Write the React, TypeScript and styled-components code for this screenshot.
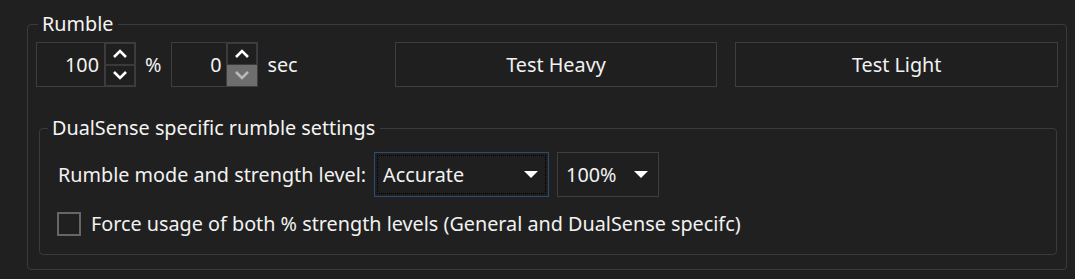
import React from "react";
import styled, { createGlobalStyle } from "styled-components";

const Global = createGlobalStyle`
  html, body { margin: 0; padding: 0; background: #202020; }
  body { font-family: "Noto Sans", "Open Sans", sans-serif; color: #f2f2f2; }
  * { box-sizing: border-box; }
`;

const Page = styled.div`
  width: 1075px;
  height: 279px;
  padding: 12px 8px 0 27px;
  background: #202020;
`;

const Group = styled.fieldset<{ $inner?: boolean }>`
  margin: 0;
  border: 1px solid #3b3b3d;
  border-radius: 4px;
  padding: ${(p) => (p.$inner ? "5px 8px 17px 8px" : "6px 8px 14px 8px")};
  min-width: 0;
`;

const Legend = styled.legend<{ $inner?: boolean }>`
  font-size: 19.8px;
  line-height: 24px;
  padding: 0 5px 0 4px;
  margin-left: ${(p) => (p.$inner ? "0px" : "2px")};
  color: #f4f4f4;
`;

const TopRow = styled.div`
  display: grid;
  grid-template-columns: 1fr 1fr 1fr;
  height: 45px;
`;

const SpinGroup = styled.div`
  display: flex;
  align-items: center;
`;

const Spin = styled.div<{ $w: number }>`
  width: ${(p) => p.$w}px;
  height: 45px;
  border: 1px solid #3e3e42;
  display: flex;
  background: #1f1f1f;
`;

const SpinValue = styled.div`
  flex: 1;
  display: flex;
  align-items: center;
  justify-content: flex-end;
  padding-right: 5px;
  font-size: 19.8px;
`;

const SpinButtons = styled.div`
  width: 31px;
  display: flex;
  flex-direction: column;
  border-left: 1px solid #3e3e42;
`;

const SpinButton = styled.div<{ $hot?: boolean }>`
  flex: 1;
  display: flex;
  align-items: center;
  justify-content: center;
  background: ${(p) => (p.$hot ? "#6e6e6e" : "#1f1f1f")};
  border: 1px solid ${(p) => (p.$hot ? "#6e6e6e" : "#3a3a3e")};
  color: ${(p) => (p.$hot ? "#b9b9b9" : "#ffffff")};
`;

const Unit = styled.span`
  font-size: 19.8px;
  margin: 0 10px 0 9px;
`;

const Button = styled.div`
  margin-left: 18px;
  height: 45px;
  border: 1px solid #3e3e42;
  background: #1f1f1f;
  display: flex;
  align-items: center;
  justify-content: center;
  font-size: 19.8px;
`;

const InnerWrap = styled.div`
  margin: 29px 1px 0 3px;
`;

const ModeRow = styled.div`
  display: flex;
  align-items: center;
  gap: 8px;
  margin-top: 7px;
  padding-left: 10px;
`;

const Label = styled.span`
  font-size: 19.8px;
`;

const Combo = styled.div<{ $w: number; $focus?: boolean }>`
  position: relative;
  width: ${(p) => p.$w}px;
  height: 45px;
  border: 1px solid ${(p) => (p.$focus ? "#2c4c74" : "#3e3e42")};
  background: #1f1f1f;
  display: flex;
  align-items: center;
  justify-content: space-between;
  padding: 0 10px 0 8px;
  font-size: 19.8px;
`;

const FocusRect = styled.div`
  position: absolute;
  inset: 2px;
  border: 1px dotted #000;
  pointer-events: none;
`;

const CheckRow = styled.div`
  display: flex;
  align-items: center;
  gap: 10px;
  margin-top: 13px;
  padding-left: 9px;
`;

const CheckBox = styled.div`
  width: 24px;
  height: 24px;
  border: 2px solid #666666;
  background: #202020;
`;

const CheckText = styled.span`
  font-size: 19.8px;
`;

const Chevron = ({ up }: { up?: boolean }) => (
  <svg width="16" height="9" viewBox="0 0 16 9">
    <polyline
      points={up ? "2,8 8,2 14,8" : "2,1 8,7 14,1"}
      fill="none"
      stroke="currentColor"
      strokeWidth="2.6"
      strokeLinejoin="miter"
    />
  </svg>
);

const Caret = () => (
  <svg width="14" height="8" viewBox="0 0 14 8">
    <polygon points="0,0 14,0 7,7" fill="#ffffff" />
  </svg>
);

export default function App() {
  return (
    <>
      <Global />
      <Page>
        <Group>
          <Legend>Rumble</Legend>
          <TopRow>
            <SpinGroup>
              <Spin $w={100}>
                <SpinValue>100</SpinValue>
                <SpinButtons>
                  <SpinButton><Chevron up /></SpinButton>
                  <SpinButton><Chevron /></SpinButton>
                </SpinButtons>
              </Spin>
              <Unit>%</Unit>
              <Spin $w={87}>
                <SpinValue>0</SpinValue>
                <SpinButtons>
                  <SpinButton><Chevron up /></SpinButton>
                  <SpinButton $hot><Chevron /></SpinButton>
                </SpinButtons>
              </Spin>
              <Unit>sec</Unit>
            </SpinGroup>
            <Button>Test Heavy</Button>
            <Button>Test Light</Button>
          </TopRow>
          <InnerWrap>
            <Group $inner>
              <Legend $inner>DualSense specific rumble settings</Legend>
              <ModeRow>
                <Label>Rumble mode and strength level:</Label>
                <Combo $w={175} $focus>
                  <FocusRect />
                  <span>Accurate</span>
                  <Caret />
                </Combo>
                <Combo $w={102}>
                  <span>100%</span>
                  <Caret />
                </Combo>
              </ModeRow>
              <CheckRow>
                <CheckBox />
                <CheckText>Force usage of both % strength levels (General and DualSense specifc)</CheckText>
              </CheckRow>
            </Group>
          </InnerWrap>
        </Group>
      </Page>
    </>
  );
}
